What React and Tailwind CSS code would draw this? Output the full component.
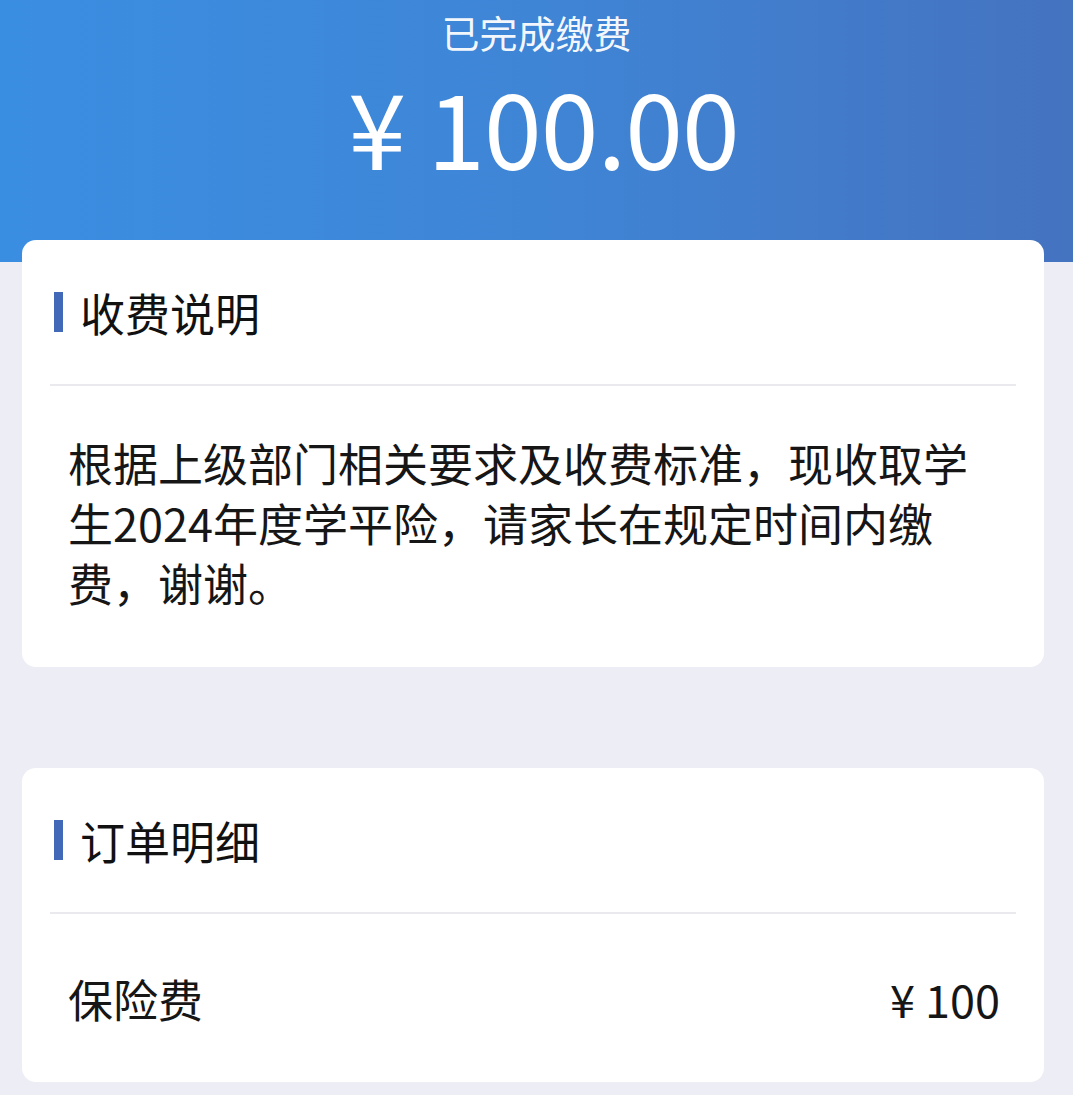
const font = { fontFamily: '"Noto Sans CJK SC", "Noto Sans", sans-serif' };

const SectionTitle = ({ children }) => (
  <div className="h-[144px] flex items-center pl-[32px]">
    <span className="w-[9px] h-[40px] bg-[#4169b8]" />
    <span className="ml-[17px] text-[45px] leading-none text-[#111111]">{children}</span>
  </div>
);

const Divider = () => <div className="mx-[28px] h-[2px] bg-[#e9e9ee]" />;

export default function App() {
  return (
    <div className="w-[1073px] h-[1095px] overflow-hidden bg-[#ededf5]" style={font}>
      <div className="h-[262px] bg-gradient-to-r from-[#3a8ee2] via-[#3f85d6] to-[#4473c0] flex flex-col items-center text-white">
        <div className="mt-[12px] text-[38px] leading-[40px] text-white/95">已完成缴费</div>
        <div className="mt-[21px] text-[104px] leading-[104px] tracking-[-1px] ml-[14px]">¥ 100.00</div>
      </div>

      <div className="relative -mt-[22px] pl-[22px] pr-[29px] flex flex-col gap-[101px]">
        <div className="bg-white rounded-[14px] h-[427px]">
          <SectionTitle>收费说明</SectionTitle>
          <Divider />
          <p className="pt-[47px] px-[46px] text-[45px] leading-[60px] text-[#161616] whitespace-nowrap">
            根据上级部门相关要求及收费标准，现收取学
            <br />
            生2024年度学平险，请家长在规定时间内缴
            <br />
            费，谢谢。
          </p>
        </div>

        <div className="bg-white rounded-[14px] h-[314px]">
          <SectionTitle>订单明细</SectionTitle>
          <Divider />
          <div className="h-[168px] flex items-center justify-between pl-[46px] pr-[44px] text-[45px] leading-none text-[#161616]">
            <span>保险费</span>
            <span>¥ 100</span>
          </div>
        </div>
      </div>
    </div>
  );
}
